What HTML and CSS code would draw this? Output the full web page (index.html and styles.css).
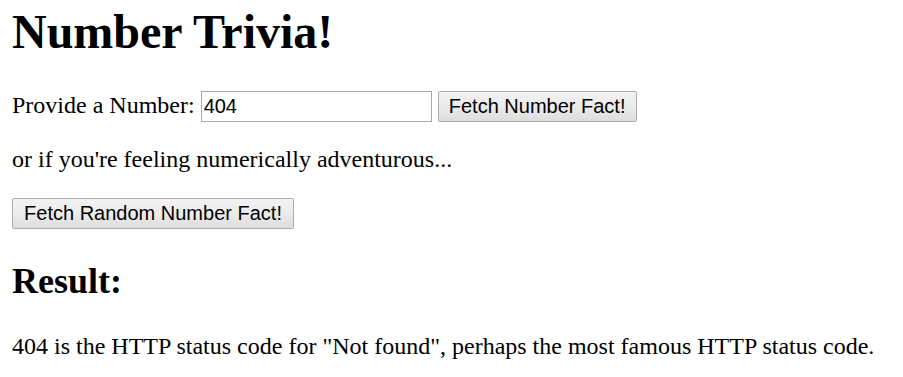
FILE: index.html
```html
<!DOCTYPE html>
<html lang="en">
<head>
<meta charset="utf-8">
<title>Number Trivia!</title>
<link rel="stylesheet" href="styles.css">
</head>
<body>
  <h1 class="title">Number Trivia!</h1>
  <div class="row">
    <label class="label" for="num">Provide a Number:</label>
    <input class="field" id="num" type="text" value="404">
    <button class="btn btn-fetch" type="button">Fetch Number Fact!</button>
  </div>
  <p class="text or-text">or if you're feeling numerically adventurous...</p>
  <button class="btn btn-random" type="button">Fetch Random Number Fact!</button>
  <h2 class="subtitle">Result:</h2>
  <p class="text result-text">404 is the HTTP status code for "Not found", perhaps the most famous HTTP status code.</p>
</body>
</html>
```

FILE: styles.css
```css
html, body {
  margin: 0;
  padding: 0;
  background: #ffffff;
}

body {
  padding: 5px 12px 0 12px;
  font-family: "Liberation Serif", "Times New Roman", serif;
  color: #000000;
}

.title {
  margin: 0;
  font-size: 48px;
  line-height: 54px;
  font-weight: bold;
}

.row {
  display: flex;
  align-items: baseline;
  gap: 6px;
  margin-top: 32px;
}

.label {
  font-size: 24px;
  line-height: 27px;
}

.field {
  box-sizing: border-box;
  width: 231px;
  height: 31px;
  margin: 0;
  padding: 0 2px;
  border: 1px solid #a9a9a9;
  border-radius: 0;
  background: #ffffff;
  font-family: "Liberation Sans", Arial, sans-serif;
  font-size: 20px;
  color: #000000;
  outline: none;
}

.btn {
  box-sizing: border-box;
  height: 31px;
  margin: 0;
  padding: 0 4px;
  border: 1px solid #adadad;
  border-radius: 2px;
  background: linear-gradient(to bottom, #f2f2f2 0%, #ebebeb 50%, #dddddd 100%);
  font-family: "Liberation Sans", Arial, sans-serif;
  font-size: 20px;
  color: #000000;
  line-height: 23px;
  white-space: nowrap;
  text-align: center;
}

.btn-fetch {
  width: 199px;
  height: 31px;
}

.btn-random {
  display: block;
  width: 282px;
  margin-top: 25px;
}

.text {
  margin: 0;
  font-size: 24px;
  line-height: 27px;
}

.or-text {
  margin-top: 24px;
}

.subtitle {
  margin: 32px 0 0 0;
  font-size: 36px;
  line-height: 41px;
  font-weight: bold;
}

.result-text {
  margin-top: 31px;
}
```
